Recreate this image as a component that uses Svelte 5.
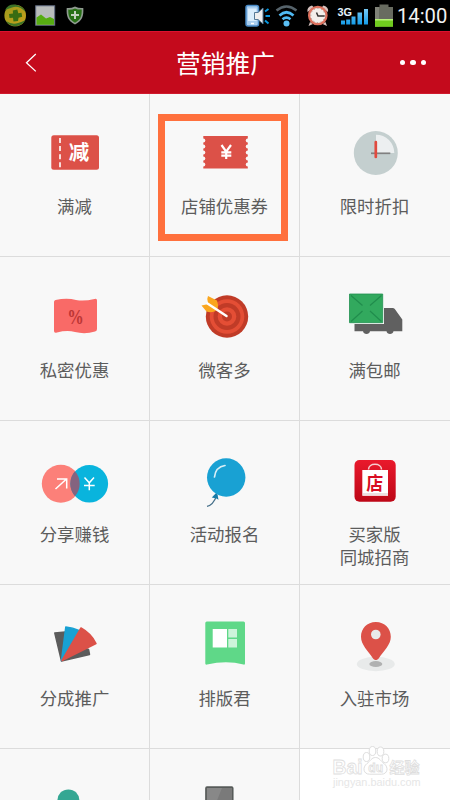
<script>
	// Tiles of the marketing page, row by row
	const tiles = [
		{ icon: 'discount', lines: ['满减'] },
		{ icon: 'coupon', lines: ['店铺优惠券'], highlighted: true },
		{ icon: 'clock', lines: ['限时折扣'] },
		{ icon: 'secret', lines: ['私密优惠'] },
		{ icon: 'target', lines: ['微客多'] },
		{ icon: 'truck', lines: ['满包邮'] },
		{ icon: 'share', lines: ['分享赚钱'] },
		{ icon: 'balloon', lines: ['活动报名'] },
		{ icon: 'store', lines: ['买家版', '同城招商'] },
		{ icon: 'fan', lines: ['分成推广'] },
		{ icon: 'layout', lines: ['排版君'] },
		{ icon: 'pin', lines: ['入驻市场'] },
		{ icon: 'person', lines: [] },
		{ icon: 'screen', lines: [] }
	];

	const perforations = [48, 54, 60, 66, 72];
</script>

<div class="screen">
	<div class="status">
		<svg width="90" height="31" viewBox="0 0 90 31">
			<defs>
				<linearGradient id="ball" x1="0" y1="0" x2="1" y2="1">
					<stop offset="0" stop-color="#9c9a1c" />
					<stop offset="1" stop-color="#c9a01c" />
				</linearGradient>
			</defs>
			<circle cx="15.2" cy="15.5" r="10.8" fill="url(#ball)" />
			<path d="M5 10Q9 3 17 5Q24 7 25.500 12Q19 5 12 7.500Q7 9 5 10zM25.500 20Q22 26 15 26.300Q9 26 6 21Q12 25 18 23Q22 22 25.500 20z" fill="#3c7428" />
			<path d="M12.800 10.500l4.500-1 1 3.700 3.200-.500.700 4-3.700 1-.500 3.300-4.500.500-.500-3.800-3.500.300-.500-4 4-.500z" fill="#386c12" />
			<rect x="35.700" y="5.800" width="19" height="19.400" fill="#b9bcbb" stroke="#626c84" />
			<path d="M36.500 17.500l4.500-3 5 4 4-1.500 4 2v5.700H36.500z" fill="#57ac12" />
			<path d="M75 6.500q4 2 8.300 1.500c.5 8-1 13-8.300 16.500C67.700 21 66.200 16 66.700 8Q71 8.500 75 6.500z" fill="#8f9b91" />
			<path d="M75 8.400q3 1.400 6.700 1.200c.2 6.500-1.200 10.400-6.700 13.100-5.500-2.700-6.900-6.600-6.700-13.100Q72 9.800 75 8.400z" fill="#287015" />
			<path d="M75 11v8M71 15h8" stroke="#c4d0be" stroke-width="2" />
		</svg>

		<div class="status-right">
			<svg width="152" height="31" viewBox="245 0 152 31">
				<defs>
					<linearGradient id="signal" x1="0" y1="0" x2="0" y2="1">
						<stop offset="0" stop-color="#77caf5" />
						<stop offset="1" stop-color="#149ce8" />
					</linearGradient>
				</defs>
				<rect x="246" y="5.500" width="12.500" height="20.500" rx="2" fill="#a8cdee" stroke="#498ac6" stroke-width="1.500" />
				<rect x="248" y="8.500" width="8.500" height="12.500" fill="#d9edfc" />
				<path d="M251 23.500h3" stroke="#fff" stroke-width="1.500" />
				<path d="M254.500 12.500h3.500l5-4.500v16l-5-4.500h-3.500z" fill="#eee" stroke="#557995" />
				<path d="M265 11.500l3.500-2.500M265.500 16h4.500M265 20.500l3.500 3" stroke="#0797df" stroke-width="2" />
				<path d="M276.500 10.500Q286.500 2.500 296.500 10.500" fill="none" stroke="#56636b" stroke-width="2.500" />
				<path d="M279.500 15.500Q286.500 9 293.500 15.500M282.500 19.300Q286.500 16 290.500 19.300" fill="none" stroke="#4fb9f2" stroke-width="2.700" />
				<circle cx="286.500" cy="23.500" r="3" fill="#5abff5" />
				<path d="M307.500 12q-1-5 4.500-6.500l2 2zM328 12q1-5-4.500-6.500l-2 2zM310 22l-1.500 4 4.500-2zM325.500 22l1.500 4-4.500-2z" fill="#d6c2bf" />
				<circle cx="317.800" cy="15.500" r="8.700" fill="#f3efeb" stroke="#dc715e" stroke-width="2.300" />
				<circle cx="317.800" cy="15.500" r="7" fill="none" stroke="#8e8580" stroke-width=".8" stroke-dasharray="1 2.600" />
				<path d="M316.500 12.500l1.500 3.500h6.500" fill="none" stroke="#373533" stroke-width="1.500" />
				<text x="337.500" y="15.500" class="network" textLength="14.500" lengthAdjust="spacingAndGlyphs">3G</text>
				<path d="M341 20.500h4v4h-4zM346.200 19.500h4v5h-4zM351.500 16.500h4v8h-4zM357.500 12.500h4.500v12h-4.500zM364 9h4v15.500h-4z" fill="url(#signal)" />
				<path d="M379.500 4.500h9V7h4.500v19.500h-18V7h4.500z" fill="#686b60" />
				<path d="M375 7h4v19.500h-4z" fill="#808278" />
				<path d="M375 19h18v7.800h-18z" fill="#70cb1e" />
				<path d="M375 19h18v1.500h-18z" fill="#b8f179" />
			</svg>
			<span class="time">14:00</span>
		</div>
	</div>

	<header>
		<svg class="back" width="12" height="20" viewBox="0 0 12 20">
			<path d="M10.800 1L1.500 9.700l9.300 8.700" fill="none" stroke="#fff" stroke-width="1.300" />
		</svg>
		<h1>营销推广</h1>
		<div class="more"><i></i><i></i><i></i></div>
	</header>

	<main>
		{#each tiles as tile}
			<div class="tile">
				<svg class="icon" width="150" height="101" viewBox="0 0 150 101">
					{#if tile.icon === 'discount'}
						<rect x="51.300" y="42.300" width="47.700" height="34.400" rx="2.500" fill="#dc5148" />
						<path d="M60 45v30" stroke="#fff" stroke-width="1.600" stroke-dasharray="5 3.100" />
						<text x="79" y="67.300" class="jian">减</text>
					{:else if tile.icon === 'coupon'}
						<rect x="53.300" y="43" width="44.500" height="32.500" fill="#dc5148" />
						{#each perforations as y}
							<circle cx="53.400" cy={y - 0.5} r="1.900" fill="#f8f8f8" />
							<circle cx="97.700" cy={y - 0.5} r="1.900" fill="#f8f8f8" />
						{/each}
						<path d="M71.500 52l4.700 6.700L81 52M71.300 59.300h10M71.300 62.700h10M76.200 58v8" fill="none" stroke="#fff" stroke-width="2.200" />
					{:else if tile.icon === 'clock'}
						<circle cx="75.800" cy="60" r="22" fill="#c4cfcf" />
						<path d="M76 60V41.700a18.300 18.300 0 0 1 18.300 18.300z" fill="#eceff0" />
						<path d="M71 60.300h19.300" stroke="#808080" stroke-width="1.700" />
						<path d="M75.800 49v15" stroke="#e04a3f" stroke-width="2.700" stroke-linecap="round" />
					{:else if tile.icon === 'secret'}
						<path d="M54 45q0-1.500 1.500-2Q67 40.500 76 43q8 1.500 18.500-1Q97 41 97 43.500V72q0 2-2 2.500-10 3-20 .500-8-2-18 .500-3 1-3-1.500z" fill="#f96a67" />
						<text x="67.300" y="67" class="percent" textLength="16.500" lengthAdjust="spacingAndGlyphs">%</text>
					{:else if tile.icon === 'target'}
						<circle cx="77" cy="59.500" r="21.200" fill="#c03b27" />
						<circle cx="77" cy="59.500" r="17.300" fill="#e44e35" />
						<circle cx="77" cy="59.500" r="13.500" fill="#c03b27" />
						<circle cx="77" cy="59.500" r="9.300" fill="#e44e35" />
						<circle cx="77" cy="59.500" r="5" fill="#c03b27" />
						<path d="M58 39l9 4.500q1.500 4 .700 8l-2.700 2.700q-4.500 2-8.500.300l-5-6 6-1.200.500-1.500q-1.500-4 0-6.800z" fill="#faa61e" />
						<path d="M57.500 46.500L76.500 59" stroke="#fff" stroke-width="2.500" stroke-linecap="round" />
					{:else if tile.icon === 'truck'}
						<path d="M54.500 66.500h29.300V51h8.700q1.500 0 2.300 1l7.500 10.500v11.800H93.500a3.600 3.600 0 0 1-7 0h-16.500a3.600 3.600 0 0 1-7 0h-8.500z" fill="#606060" />
						<path d="M49 36.500h35V67H49z" fill="#f8f8f8" />
						<path d="M49.500 37h33.200v28.700H49.500z" fill="#32a95e" stroke="#229150" stroke-width=".8" />
						<path d="M51 38.500l11.500 10M81.500 38.500l-11.500 10M51 64.500l11.500-10.500M81.500 64.500L70 54" stroke="#218d4d" stroke-width="1.200" />
					{:else if tile.icon === 'share'}
						<circle cx="60.800" cy="62.800" r="19" fill="#fc8079" />
						<circle cx="89.300" cy="62.800" r="18.800" fill="#09b4dd" />
						<path d="M75 50.300a19 19 0 0 1 0 25 18.800 18.800 0 0 1 0-25z" fill="#84637f" />
						<path d="M55.500 68l11-10M57 58h9.700v9.500" fill="none" stroke="#fff" stroke-width="1.500" />
						<path d="M84.500 56.500l4.800 5.300 4.700-5.300M84 64.500h10.700M89.300 61.500v7.700" fill="none" stroke="#fff" stroke-width="1.500" />
					{:else if tile.icon === 'balloon'}
						<path d="M67 74Q63 84.500 57 85.300" fill="none" stroke="#46708a" stroke-width="1.200" />
						<path d="M67 71l1.500 7.700-2-1.200-4.700-1z" fill="#197ba6" />
						<circle cx="76.200" cy="56.500" r="19.200" fill="#19a1d3" />
						<path d="M64.500 56q1-10 10.500-11.500" fill="none" stroke="#d8eef6" stroke-width="1.700" stroke-linecap="round" />
					{:else if tile.icon === 'store'}
						<defs>
							<linearGradient id="store" x1="0" y1="0" x2="0" y2="1">
								<stop offset="0" stop-color="#e9192c" />
								<stop offset="1" stop-color="#bd0717" />
							</linearGradient>
						</defs>
						<rect x="54.500" y="39" width="41.200" height="41.700" rx="5" fill="url(#store)" />
						<path d="M68.500 48.500c0-7 13-7 13 0" fill="none" stroke="#f5cdd0" stroke-width="1.500" />
						<path d="M62.300 49h25.700v25.800H62.300z" fill="#fff" />
						<path d="M62.300 72.500h25.700v1h-25.700z" fill="#d9c0c2" />
						<text x="66.300" y="68.500" class="dian" textLength="17" lengthAdjust="spacingAndGlyphs">店</text>
					{:else if tile.icon === 'fan'}
						<g stroke-linejoin="round" stroke-width="1.500">
							<path d="M61.500 76L54.800 48l10.500-1L75 60l13.500 4.500 1 5z" fill="#5c5c5c" stroke="#5c5c5c" />
							<path d="M61.500 75.500L65.800 42q7 .500 13 3.500z" fill="#19a1d3" stroke="#19a1d3" />
							<path d="M62 75.500L81 43q10 5.500 15 15.500z" fill="#dc5148" stroke="#dc5148" />
						</g>
					{:else if tile.icon === 'layout'}
						<path d="M55.300 38q0-1.500 1.500-1.500h36.700q1.500 0 1.500 1.500v40.500q0 1.500-1.500 1-17-4.500-36.500 0-1.700.500-1.700-1z" fill="#5fd888" />
						<path d="M62.700 44h14.300v18.500H62.700z" fill="#fff" />
						<path d="M78.300 44H87v8.500h-8.700zM78.300 54H87v8.500h-8.700z" fill="#cdf4da" />
					{:else if tile.icon === 'pin'}
						<ellipse cx="75.800" cy="79" rx="19" ry="7.200" fill="#e8eaea" />
						<ellipse cx="75.800" cy="79" rx="6.500" ry="3" fill="#b0b1b1" />
						<path d="M75.800 37c9 0 15 6.500 15 14.800 0 8-7 14-11.800 21.200-2 2.800-4.300 2.800-6.300 0C68 65.800 61 59.800 61 51.800 61 43.500 67 37 75.800 37z" fill="#dc5148" />
						<circle cx="75.800" cy="49.500" r="4.800" fill="#e9eaea" />
					{:else if tile.icon === 'person'}
						<circle cx="68.400" cy="51.400" r="11" fill="#34a793" />
					{:else if tile.icon === 'screen'}
						<rect x="56" y="38.200" width="26.700" height="34" rx="1" fill="#888" stroke="#575b59" stroke-width="1.700" />
						<path d="M72 39h10v20H64z" fill="#7a7a7a" />
					{/if}
				</svg>
				{#each tile.lines as line}
					<span class="label">{line}</span>
				{/each}
				{#if tile.highlighted}
					<div class="highlight"></div>
				{/if}
			</div>
		{/each}

		<div class="tile blank">
			<svg class="watermark" width="150" height="55" viewBox="300 745 150 55">
				<g fill="#fff" stroke="#dedede" stroke-width="1">
					<text x="332.500" y="773.500" class="mark bai" textLength="30" lengthAdjust="spacingAndGlyphs">Bai</text>
					<ellipse cx="366.500" cy="757" rx="3.300" ry="4.500" />
					<ellipse cx="372.500" cy="751" rx="3.300" ry="4.500" />
					<ellipse cx="380.500" cy="751.500" rx="3.300" ry="4.500" />
					<ellipse cx="385.500" cy="758.500" rx="3.300" ry="4.300" />
					<path d="M375.500 757.500c4 0 5 3.500 8.500 6 5 4 3.500 10.700-2.500 10.700h-12c-6 0-7.500-6.700-2.500-10.700 3.500-2.500 4.500-6 8.500-6z" />
					<text x="368.300" y="772" class="mark du">du</text>
					<text x="389.500" y="773" class="mark cn">经验</text>
				</g>
				<text x="333" y="785.500" class="site" textLength="87.500" lengthAdjust="spacingAndGlyphs">jingyan.baidu.com</text>
			</svg>
		</div>
	</main>
</div>

<style>
	:global(body) {
		background: #fff;
	}
	.screen {
		width: 450px;
		height: 800px;
		overflow: hidden;
		display: flex;
		flex-direction: column;
		font-family: 'Noto Sans CJK SC', sans-serif;
	}
	.status {
		flex: none;
		display: flex;
		justify-content: space-between;
		height: 31px;
		background: #000;
	}
	.status-right {
		display: flex;
		width: 205px;
	}
	.network {
		font: bold 11.500px 'Liberation Sans', sans-serif;
		fill: #e4f3fc;
	}
	.time {
		font: 20.200px/32px Roboto, sans-serif;
		color: #f2f2f2;
		white-space: nowrap;
	}
	header {
		position: relative;
		z-index: 1;
		flex: none;
		box-sizing: border-box;
		display: grid;
		grid-template-columns: 1fr auto 1fr;
		align-items: center;
		height: 63px;
		margin-bottom: -1px;
		padding: 0 24px 0 25px;
		background: #c40a1c;
		border-top: 1px solid #dc1230;
		border-bottom: 1px solid #d01a2d;
	}
	h1 {
		margin: 0 0 2px;
		font-size: 24.700px;
		font-weight: 400;
		line-height: 36px;
		color: #fff;
	}
	.more {
		display: flex;
		justify-content: flex-end;
		gap: 5px;
	}
	.more i {
		width: 5.500px;
		height: 5.500px;
		border-radius: 50%;
		background: #fff;
	}
	main {
		display: grid;
		grid-template-columns: repeat(3, 150px);
		grid-auto-rows: 164px;
	}
	.tile {
		position: relative;
		display: flex;
		flex-direction: column;
		align-items: center;
		background: #f8f8f8;
		box-shadow: inset -1px -1px 0 #dcdcdc;
	}
	.tile:nth-child(3n) {
		box-shadow: inset 0 -1px 0 #dcdcdc;
	}
	.tile.blank {
		background: #fff;
	}
	.icon {
		flex: none;
	}
	.watermark {
		flex: none;
		margin-top: -4px;
	}
	.label {
		padding-right: 1px;
		font-size: 17.400px;
		line-height: 23px;
		color: #5c5c5c;
		white-space: nowrap;
	}
	.highlight {
		position: absolute;
		top: 21px;
		left: 8px;
		box-sizing: border-box;
		width: 130px;
		height: 127px;
		border: 7px solid #ff703d;
	}
	.jian {
		font-size: 20.500px;
		font-weight: 700;
		text-anchor: middle;
		fill: #fff;
	}
	.percent {
		font: bold 22px 'Liberation Serif', serif;
		fill: #bd3635;
	}
	.dian {
		font-size: 18px;
		font-weight: 700;
		fill: #d80c22;
	}
	.mark {
		font-family: 'Liberation Sans', 'Noto Sans CJK SC', sans-serif;
		font-weight: 700;
		stroke-width: 0.8px;
	}
	.bai {
		font-size: 20px;
	}
	.du {
		font-size: 12px;
	}
	.cn {
		font-size: 15px;
	}
	.site {
		font: 11px 'Liberation Sans', sans-serif;
		fill: #e6e6e6;
	}
</style>
